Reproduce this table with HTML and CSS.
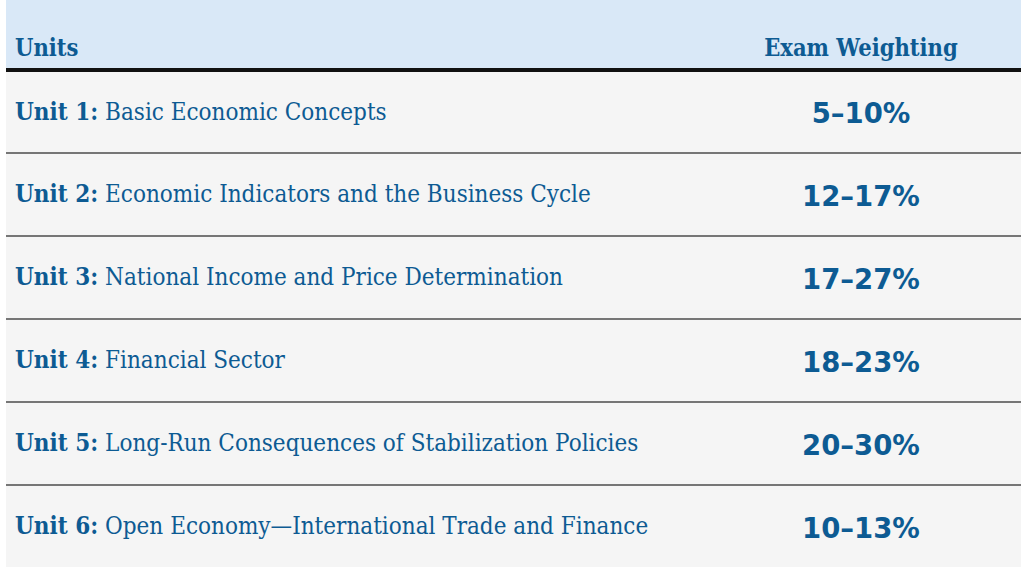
FILE: index.html
```html
<!DOCTYPE html>
<html>
<head>
<meta charset="utf-8">
<link rel="stylesheet" href="styles.css">
</head>
<body>
<table class="units">
  <thead>
    <tr><th class="c-unit">Units</th><th class="c-weight">Exam Weighting</th></tr>
  </thead>
  <tbody>
    <tr><td class="c-unit"><b>Unit 1:</b> Basic Economic Concepts</td><td class="c-weight">5–10%</td></tr>
    <tr><td class="c-unit"><b>Unit 2:</b> Economic Indicators and the Business Cycle</td><td class="c-weight">12–17%</td></tr>
    <tr><td class="c-unit"><b>Unit 3:</b> National Income and Price Determination</td><td class="c-weight">17–27%</td></tr>
    <tr><td class="c-unit"><b>Unit 4:</b> Financial Sector</td><td class="c-weight">18–23%</td></tr>
    <tr><td class="c-unit"><b>Unit 5:</b> Long-Run Consequences of Stabilization Policies</td><td class="c-weight">20–30%</td></tr>
    <tr><td class="c-unit"><b>Unit 6:</b> Open Economy—International Trade and Finance</td><td class="c-weight">10–13%</td></tr>
  </tbody>
</table>
</body>
</html>
```
FILE: styles.css
```css
html, body { margin: 0; padding: 0; background: #ffffff; }
body { padding: 0 3px 0 6px; }
.units {
  width: 100%;
  border-collapse: collapse;
  color: #0d5b93;
  font-family: "DejaVu Serif Condensed", "DejaVu Serif", serif;
}
.units th {
  background: #d9e8f7;
  height: 70px;
  padding: 0 0 6px 9px;
  vertical-align: bottom;
  box-sizing: border-box;
  font-size: 23.5px;
  font-weight: bold;
  text-align: left;
  border-bottom: 4px solid #111;
}
.units th.c-weight { text-align: center; padding-left: 0; }
.units td {
  background: #f5f5f5;
  height: 83px;
  padding: 0 0 2px 9px;
  box-sizing: border-box;
  font-size: 24px;
  border-bottom: 2px solid #767676;
}
.units td b { font-weight: bold; }
.units .c-weight { width: 320px; }
.units td.c-weight {
  text-align: center;
  padding: 2px 0 0 0;
  font-family: "DejaVu Sans", sans-serif;
  font-weight: bold;
  font-size: 27.5px;
}
```
